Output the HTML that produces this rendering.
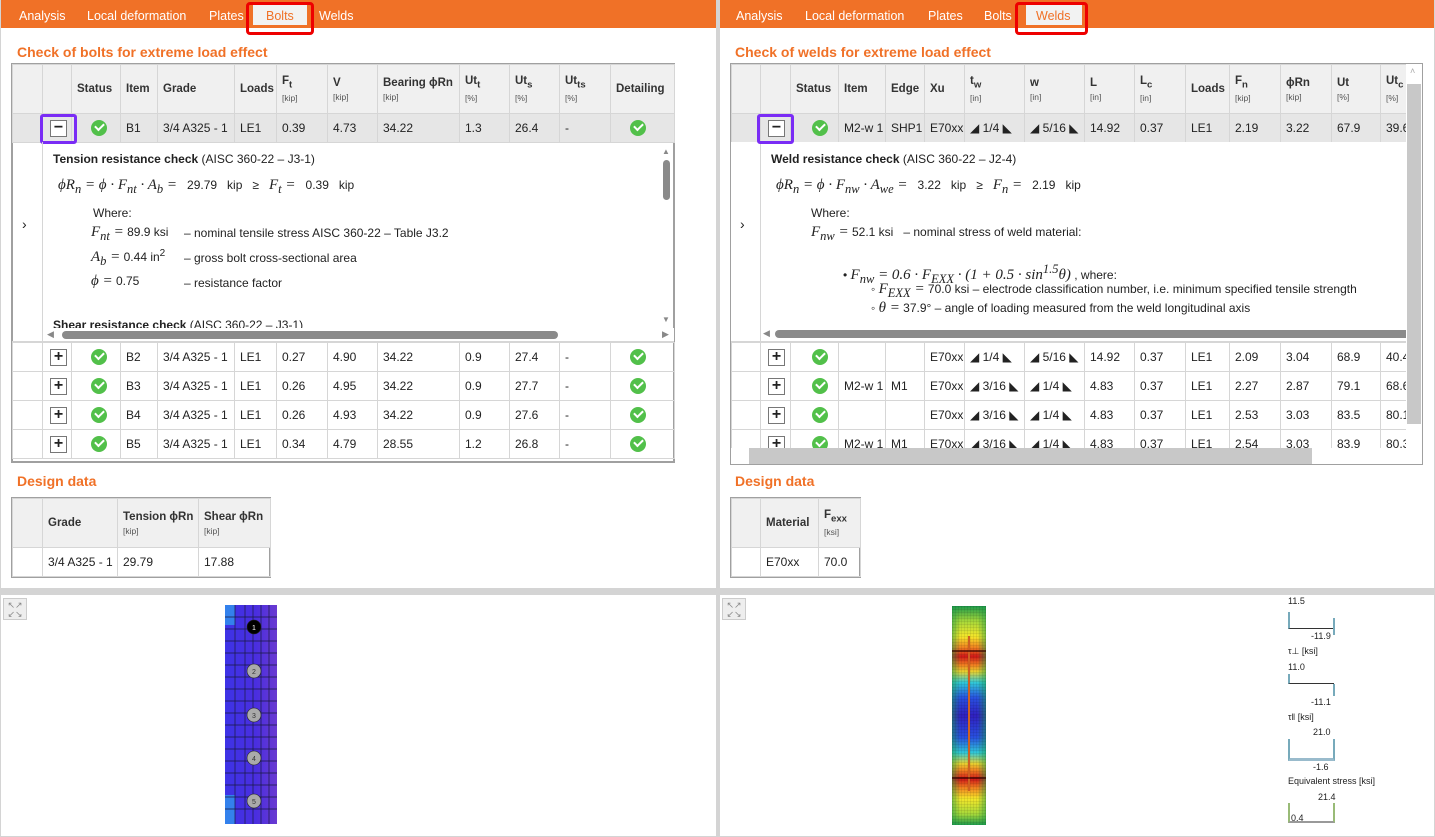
<!DOCTYPE html>
<html><head><meta charset="utf-8">
<style>
*{box-sizing:border-box;margin:0;padding:0}
body{width:1435px;height:837px;background:#d4d4d4;font-family:"Liberation Sans",sans-serif;color:#222;position:relative;overflow:hidden}
.a{position:absolute}
.panel{position:absolute;background:#fff}
.tabs{position:absolute;left:0;top:0;height:28px;background:#f07127;font-size:12.5px;color:#fff}
.tabs span{position:absolute;top:9px}
.h{position:absolute;color:#f07127;font-weight:bold;font-size:14px}
table{border-collapse:collapse;table-layout:fixed;position:absolute;font-size:12px}
td{border:1px solid #d6d6d6;padding:0 0 0 5px;white-space:nowrap;overflow:hidden;height:29px}
tr.hd td{background:#f0f0f0;font-weight:bold;color:#333;font-size:11.5px;height:49px;vertical-align:middle}
tr.hd small{display:block;font-weight:normal;font-size:8.5px;color:#555;margin-top:3px}
tr.sel td{background:#e6e6e6}
.ok{display:inline-block;width:16px;height:16px;border-radius:50%;background:#52c04a;position:relative;vertical-align:middle;margin-left:14px}
.ok:after{content:"";position:absolute;left:4px;top:3px;width:7px;height:4px;border-left:2px solid #fff;border-bottom:2px solid #fff;transform:rotate(-45deg)}
.bx{display:inline-block;width:17px;height:17px;border:1px solid #777;background:#fff;text-align:center;line-height:14px;font-size:16px;font-weight:bold;vertical-align:middle;margin-left:2px}
.pb{position:absolute;border:3px solid #7a2cf5;border-radius:3px}
.rb{position:absolute;border:3px solid #e00;border-radius:4px}
.m{font-family:"Liberation Serif",serif;font-style:italic;font-size:15px}
.dt{position:absolute;font-size:12px}
.gray{border:2px solid #a0a0a0}
</style></head><body>

<!-- LEFT TOP PANEL -->
<div class="panel" style="left:1px;top:1px;width:715px;height:587px"></div>
<div class="tabs" style="left:1px;width:715px"><span style="left:18px">Analysis</span><span style="left:86px">Local deformation</span><span style="left:208px">Plates</span><span style="left:252px;top:3px;height:22px;width:54px;background:#f2f2f2;color:#f07127;padding:6px 0 0 13px">Bolts</span><span style="left:318px">Welds</span></div>
<div class="rb" style="left:246px;top:2px;width:68px;height:33px"></div>
<div class="h" style="left:17px;top:44px">Check of bolts for extreme load effect</div>

<div class="a gray" style="left:11px;top:63px;width:664px;height:400px"></div>
<table style="left:12px;top:64px;width:662px">
<colgroup><col width=30><col width=29><col width=49><col width=37><col width=77><col width=42><col width=51><col width=50><col width=82><col width=50><col width=50><col width=51><col width=64></colgroup>
<tr class="hd"><td></td><td></td><td>Status</td><td>Item</td><td>Grade</td><td>Loads</td><td>F<sub>t</sub><small>[kip]</small></td><td>V<small>[kip]</small></td><td>Bearing ϕRn<small>[kip]</small></td><td>Ut<sub>t</sub><small>[%]</small></td><td>Ut<sub>s</sub><small>[%]</small></td><td>Ut<sub>ts</sub><small>[%]</small></td><td>Detailing</td></tr>
<tr class="sel"><td></td><td><span class="bx">−</span></td><td><span class="ok"></span></td><td>B1</td><td>3/4 A325 - 1</td><td>LE1</td><td>0.39</td><td>4.73</td><td>34.22</td><td>1.3</td><td>26.4</td><td>-</td><td><span class="ok"></span></td></tr>
</table>
<div class="pb" style="left:40px;top:114px;width:37px;height:30px"></div>
<div class="a" style="left:12px;top:142px;width:662px;height:200px;border-bottom:1px solid #d6d6d6"></div>
<div class="a" style="left:42px;top:142px;width:1px;height:200px;background:#d6d6d6"></div>
<div class="a" style="left:22px;top:216px;font-size:14px">›</div>
<div class="dt" style="left:53px;top:152px"><b>Tension resistance check</b> (AISC 360-22 – J3-1)</div>
<div class="dt" style="left:58px;top:177px"><span class="m">ϕR<sub>n</sub> = ϕ · F<sub>nt</sub> · A<sub>b</sub> =</span>&nbsp;&nbsp;&nbsp;29.79&nbsp;&nbsp;&nbsp;kip&nbsp;&nbsp;&nbsp;≥&nbsp;&nbsp;&nbsp;<span class="m">F<sub>t</sub> =</span>&nbsp;&nbsp;&nbsp;0.39&nbsp;&nbsp;&nbsp;kip</div>
<div class="dt" style="left:93px;top:206px">Where:</div>
<div class="dt" style="left:91px;top:224px"><span class="m">F<sub>nt</sub> =</span> 89.9 ksi</div><div class="dt" style="left:184px;top:226px">– nominal tensile stress AISC 360-22 – Table J3.2</div>
<div class="dt" style="left:91px;top:248px"><span class="m">A<sub>b</sub> =</span> 0.44 in<sup>2</sup></div><div class="dt" style="left:184px;top:251px">– gross bolt cross-sectional area</div>
<div class="dt" style="left:91px;top:273px"><span class="m">ϕ =</span> 0.75</div><div class="dt" style="left:184px;top:276px">– resistance factor</div>
<div class="dt" style="left:53px;top:318px;height:10px;overflow:hidden"><b>Shear resistance check</b> (AISC 360-22 – J3-1)</div>
<div class="a" style="left:43px;top:328px;width:631px;height:13px;background:#fff"></div>
<div class="a" style="left:62px;top:331px;width:496px;height:8px;border-radius:4px;background:#8a8a8a"></div>
<div class="a" style="left:47px;top:329px;font-size:9px;color:#888">◀</div><div class="a" style="left:662px;top:329px;font-size:9px;color:#888">▶</div>
<div class="a" style="left:663px;top:160px;width:7px;height:40px;border-radius:4px;background:#8a8a8a"></div>
<div class="a" style="left:662px;top:147px;font-size:8px;color:#888">▲</div><div class="a" style="left:662px;top:315px;font-size:8px;color:#888">▼</div>
<table style="left:12px;top:342px;width:662px">
<colgroup><col width=30><col width=29><col width=49><col width=37><col width=77><col width=42><col width=51><col width=50><col width=82><col width=50><col width=50><col width=51><col width=64></colgroup>
<tr><td></td><td><span class="bx">+</span></td><td><span class="ok"></span></td><td>B2</td><td>3/4 A325 - 1</td><td>LE1</td><td>0.27</td><td>4.90</td><td>34.22</td><td>0.9</td><td>27.4</td><td>-</td><td><span class="ok"></span></td></tr>
<tr><td></td><td><span class="bx">+</span></td><td><span class="ok"></span></td><td>B3</td><td>3/4 A325 - 1</td><td>LE1</td><td>0.26</td><td>4.95</td><td>34.22</td><td>0.9</td><td>27.7</td><td>-</td><td><span class="ok"></span></td></tr>
<tr><td></td><td><span class="bx">+</span></td><td><span class="ok"></span></td><td>B4</td><td>3/4 A325 - 1</td><td>LE1</td><td>0.26</td><td>4.93</td><td>34.22</td><td>0.9</td><td>27.6</td><td>-</td><td><span class="ok"></span></td></tr>
<tr><td></td><td><span class="bx">+</span></td><td><span class="ok"></span></td><td>B5</td><td>3/4 A325 - 1</td><td>LE1</td><td>0.34</td><td>4.79</td><td>28.55</td><td>1.2</td><td>26.8</td><td>-</td><td><span class="ok"></span></td></tr>
</table>

<div class="h" style="left:17px;top:473px">Design data</div>
<div class="a gray" style="left:11px;top:497px;width:260px;height:81px"></div>
<table style="left:12px;top:498px;width:258px">
<colgroup><col width=30><col width=75><col width=81><col width=72></colgroup>
<tr class="hd"><td></td><td>Grade</td><td>Tension ϕRn<small>[kip]</small></td><td>Shear ϕRn<small>[kip]</small></td></tr>
<tr><td></td><td>3/4 A325 - 1</td><td>29.79</td><td>17.88</td></tr>
</table>

<!-- RIGHT TOP PANEL -->
<div class="panel" style="left:720px;top:1px;width:714px;height:587px"></div>
<div class="tabs" style="left:720px;width:714px"><span style="left:16px">Analysis</span><span style="left:85px">Local deformation</span><span style="left:208px">Plates</span><span style="left:264px">Bolts</span><span style="left:306px;top:3px;height:22px;width:56px;background:#f2f2f2;color:#f07127;padding:6px 0 0 10px">Welds</span></div>
<div class="rb" style="left:1015px;top:2px;width:73px;height:33px"></div>
<div class="h" style="left:735px;top:44px">Check of welds for extreme load effect</div>

<div class="a gray" style="left:730px;top:63px;width:693px;height:402px"></div>
<div class="a" style="left:731px;top:64px;width:675px;height:384px;overflow:hidden">
<table style="left:0;top:0;width:720px">
<colgroup><col width=29><col width=30><col width=48><col width=47><col width=39><col width=40><col width=60><col width=60><col width=50><col width=51><col width=44><col width=51><col width=51><col width=49><col width=71></colgroup>
<tr class="hd"><td></td><td></td><td>Status</td><td>Item</td><td>Edge</td><td>Xu</td><td>t<sub>w</sub><small>[in]</small></td><td>w<small>[in]</small></td><td>L<small>[in]</small></td><td>L<sub>c</sub><small>[in]</small></td><td>Loads</td><td>F<sub>n</sub><small>[kip]</small></td><td>ϕRn<small>[kip]</small></td><td>Ut<small>[%]</small></td><td>Ut<sub>c</sub><small>[%]</small></td></tr>
<tr class="sel"><td></td><td><span class="bx">−</span></td><td><span class="ok" style="margin-left:16px"></span></td><td>M2-w 1</td><td>SHP1</td><td>E70xx</td><td>◢ 1/4 ◣</td><td>◢ 5/16 ◣</td><td>14.92</td><td>0.37</td><td>LE1</td><td>2.19</td><td>3.22</td><td>67.9</td><td>39.6</td></tr>
</table>
<div class="a" style="left:0;top:78px;width:675px;height:200px;background:#fff;border-bottom:1px solid #d6d6d6"></div>
<div class="a" style="left:29px;top:78px;width:1px;height:200px;background:#d6d6d6"></div>
<div class="a" style="left:9px;top:152px;font-size:14px">›</div>
<div class="dt" style="left:40px;top:88px"><b>Weld resistance check</b> (AISC 360-22 – J2-4)</div>
<div class="dt" style="left:45px;top:113px"><span class="m">ϕR<sub>n</sub> = ϕ · F<sub>nw</sub> · A<sub>we</sub> =</span>&nbsp;&nbsp;&nbsp;3.22&nbsp;&nbsp;&nbsp;kip&nbsp;&nbsp;&nbsp;≥&nbsp;&nbsp;&nbsp;<span class="m">F<sub>n</sub> =</span>&nbsp;&nbsp;&nbsp;2.19&nbsp;&nbsp;&nbsp;kip</div>
<div class="dt" style="left:80px;top:142px">Where:</div>
<div class="dt" style="left:80px;top:160px"><span class="m">F<sub>nw</sub> =</span> 52.1 ksi&nbsp;&nbsp;&nbsp;– nominal stress of weld material:</div>
<div class="dt" style="left:112px;top:198px">• <span class="m">F<sub>nw</sub> = 0.6 · F<sub>EXX</sub> · (1 + 0.5 · sin<sup>1.5</sup>θ)</span> , where:</div>
<div class="dt" style="left:140px;top:217px">◦ <span class="m">F<sub>EXX</sub> =</span> 70.0 ksi – electrode classification number, i.e. minimum specified tensile strength</div>
<div class="dt" style="left:140px;top:236px">◦ <span class="m">θ =</span> 37.9° – angle of loading measured from the weld longitudinal axis</div>
<div class="a" style="left:44px;top:266px;width:640px;height:8px;border-radius:4px;background:#8a8a8a"></div>
<div class="a" style="left:32px;top:264px;font-size:9px;color:#888">◀</div>
<table style="left:0;top:278px;width:720px">
<colgroup><col width=29><col width=30><col width=48><col width=47><col width=39><col width=40><col width=60><col width=60><col width=50><col width=51><col width=44><col width=51><col width=51><col width=49><col width=71></colgroup>
<tr><td></td><td><span class="bx">+</span></td><td><span class="ok" style="margin-left:16px"></span></td><td></td><td></td><td>E70xx</td><td>◢ 1/4 ◣</td><td>◢ 5/16 ◣</td><td>14.92</td><td>0.37</td><td>LE1</td><td>2.09</td><td>3.04</td><td>68.9</td><td>40.4</td></tr>
<tr><td></td><td><span class="bx">+</span></td><td><span class="ok" style="margin-left:16px"></span></td><td>M2-w 1</td><td>M1</td><td>E70xx</td><td>◢ 3/16 ◣</td><td>◢ 1/4 ◣</td><td>4.83</td><td>0.37</td><td>LE1</td><td>2.27</td><td>2.87</td><td>79.1</td><td>68.6</td></tr>
<tr><td></td><td><span class="bx">+</span></td><td><span class="ok" style="margin-left:16px"></span></td><td></td><td></td><td>E70xx</td><td>◢ 3/16 ◣</td><td>◢ 1/4 ◣</td><td>4.83</td><td>0.37</td><td>LE1</td><td>2.53</td><td>3.03</td><td>83.5</td><td>80.1</td></tr>
<tr><td></td><td><span class="bx">+</span></td><td><span class="ok" style="margin-left:16px"></span></td><td>M2-w 1</td><td>M1</td><td>E70xx</td><td>◢ 3/16 ◣</td><td>◢ 1/4 ◣</td><td>4.83</td><td>0.37</td><td>LE1</td><td>2.54</td><td>3.03</td><td>83.9</td><td>80.3</td></tr>
</table>
</div>
<div class="a" style="left:1406px;top:64px;width:16px;height:384px;background:#fff"></div>
<div class="a" style="left:1407px;top:84px;width:14px;height:340px;background:#c8c8c8"></div>
<div class="a" style="left:1410px;top:66px;font-size:9px;color:#aaa">˄</div>
<div class="a" style="left:731px;top:448px;width:691px;height:16px;background:#fff"></div>
<div class="a" style="left:749px;top:448px;width:563px;height:16px;background:#c8c8c8"></div>
<div class="pb" style="left:757px;top:114px;width:37px;height:30px"></div>

<div class="h" style="left:735px;top:473px">Design data</div>
<div class="a gray" style="left:730px;top:497px;width:131px;height:81px"></div>
<table style="left:731px;top:498px;width:129px">
<colgroup><col width=29><col width=58><col width=42></colgroup>
<tr class="hd"><td></td><td>Material</td><td>F<sub>exx</sub><small>[ksi]</small></td></tr>
<tr><td></td><td>E70xx</td><td>70.0</td></tr>
</table>

<!-- BOTTOM PANELS -->
<div class="panel" style="left:1px;top:595px;width:715px;height:241px"></div>
<div class="panel" style="left:720px;top:595px;width:714px;height:241px"></div>
<div class="a" style="left:3px;top:598px;width:24px;height:22px;background:#eee;border:1px solid #ccc;font-size:9px;color:#888;text-align:center;line-height:9px;padding-top:2px">↖↗<br>↙↘</div>
<div class="a" style="left:722px;top:598px;width:24px;height:22px;background:#eee;border:1px solid #ccc;font-size:9px;color:#888;text-align:center;line-height:9px;padding-top:2px">↖↗<br>↙↘</div>

<svg class="a" style="left:225px;top:605px" width="52" height="219" viewBox="0 0 52 219">
<defs><linearGradient id="pg" x1="0" x2="1"><stop offset="0" stop-color="#3d33e6"/><stop offset=".6" stop-color="#4a2ee0"/><stop offset="1" stop-color="#6a3ad0"/></linearGradient></defs>
<rect width="52" height="219" fill="url(#pg)"/>
<rect x="0" y="0" width="10" height="20" fill="#2fa3f0" opacity=".7"/>
<rect x="0" y="190" width="10" height="29" fill="#2fa3f0" opacity=".7"/>
<g stroke="#1a1a40" stroke-width=".7" fill="none">
<path d="M0 12H52M0 24H52M0 36H52M0 48H52M0 60H52M0 72H52M0 84H52M0 96H52M0 108H52M0 120H52M0 132H52M0 144H52M0 156H52M0 168H52M0 180H52M0 192H52M0 204H52"/>
<path d="M10 0V219M20 0V219M28 0V219M36 0V219M44 0V219"/>
</g>
<g stroke="#222" stroke-width=".6" font-size="7" text-anchor="middle" font-family="Liberation Sans">
<circle cx="29" cy="22" r="7" fill="#000"/><text x="29" y="25" fill="#fff" stroke="none">1</text>
<circle cx="29" cy="66" r="7" fill="#aaa"/><text x="29" y="69" fill="#333" stroke="none">2</text>
<circle cx="29" cy="110" r="7" fill="#aaa"/><text x="29" y="113" fill="#333" stroke="none">3</text>
<circle cx="29" cy="153" r="7" fill="#aaa"/><text x="29" y="156" fill="#333" stroke="none">4</text>
<circle cx="29" cy="196" r="7" fill="#aaa"/><text x="29" y="199" fill="#333" stroke="none">5</text>
</g></svg>

<svg class="a" style="left:952px;top:606px" width="34" height="219" viewBox="0 0 34 219">
<defs><linearGradient id="wg" x1="0" y1="0" x2="0" y2="1">
<stop offset="0" stop-color="#1e9a4a"/><stop offset=".07" stop-color="#a6d83a"/><stop offset=".14" stop-color="#f5e62a"/><stop offset=".19" stop-color="#f08020"/><stop offset=".23" stop-color="#d01818"/><stop offset=".27" stop-color="#f08020"/><stop offset=".3" stop-color="#e8d030"/><stop offset=".35" stop-color="#30c8d8"/><stop offset=".42" stop-color="#2850e0"/><stop offset=".5" stop-color="#3020c0"/><stop offset=".6" stop-color="#2850e0"/><stop offset=".67" stop-color="#30c8d8"/><stop offset=".72" stop-color="#e8d030"/><stop offset=".75" stop-color="#f08020"/><stop offset=".79" stop-color="#d01818"/><stop offset=".83" stop-color="#f08020"/><stop offset=".88" stop-color="#f5e62a"/><stop offset=".95" stop-color="#a6d83a"/><stop offset="1" stop-color="#1e9a4a"/></linearGradient>
<linearGradient id="edge" x1="0" x2="1"><stop offset="0" stop-color="#1e9a4a" stop-opacity=".55"/><stop offset=".25" stop-color="#1e9a4a" stop-opacity="0"/><stop offset=".75" stop-color="#1e9a4a" stop-opacity="0"/><stop offset="1" stop-color="#1e9a4a" stop-opacity=".55"/></linearGradient>
<pattern id="gr" width="3" height="3" patternUnits="userSpaceOnUse"><path d="M0 0H3M0 0V3" stroke="#000" stroke-width=".3" opacity=".5"/></pattern></defs>
<rect width="34" height="219" fill="url(#wg)"/><rect width="34" height="219" fill="url(#edge)"/><rect width="34" height="219" fill="url(#gr)"/>
<rect x="16" y="30" width="2" height="155" fill="#d06020"/>
<path d="M0 45H34M0 172H34" stroke="#300" stroke-width="1.2"/>
</svg>

<div class="a" style="left:1288px;top:596px;font-size:9px;line-height:11px">11.5</div>
<div class="a" style="left:1288px;top:612px;width:46px;height:17px;border-left:2px solid #7ab;border-bottom:1px solid #333"></div>
<div class="a" style="left:1333px;top:618px;width:2px;height:17px;background:#7ab"></div>
<div class="a" style="left:1311px;top:631px;font-size:9px">-11.9</div>
<div class="a" style="left:1288px;top:646px;font-size:9px">τ⊥ [ksi]</div>
<div class="a" style="left:1288px;top:662px;font-size:9px">11.0</div>
<div class="a" style="left:1288px;top:674px;width:46px;height:10px;border-left:2px solid #7ab;border-bottom:1px solid #333"></div>
<div class="a" style="left:1333px;top:684px;width:2px;height:12px;background:#7ab"></div>
<div class="a" style="left:1311px;top:697px;font-size:9px">-11.1</div>
<div class="a" style="left:1288px;top:712px;font-size:9px">τ‖ [ksi]</div>
<div class="a" style="left:1313px;top:727px;font-size:9px">21.0</div>
<div class="a" style="left:1288px;top:739px;width:47px;height:22px;border-left:2px solid #7ab;border-right:2px solid #7ab;border-bottom:3px solid #9bc"></div>
<div class="a" style="left:1313px;top:762px;font-size:9px">-1.6</div>
<div class="a" style="left:1288px;top:776px;font-size:9px">Equivalent stress [ksi]</div>
<div class="a" style="left:1318px;top:792px;font-size:9px">21.4</div>
<div class="a" style="left:1288px;top:803px;width:47px;height:20px;border-left:2px solid #9b7;border-right:2px solid #9b7;border-bottom:2px solid #999"></div>
<div class="a" style="left:1291px;top:813px;font-size:9px">0.4</div>
</body></html>
